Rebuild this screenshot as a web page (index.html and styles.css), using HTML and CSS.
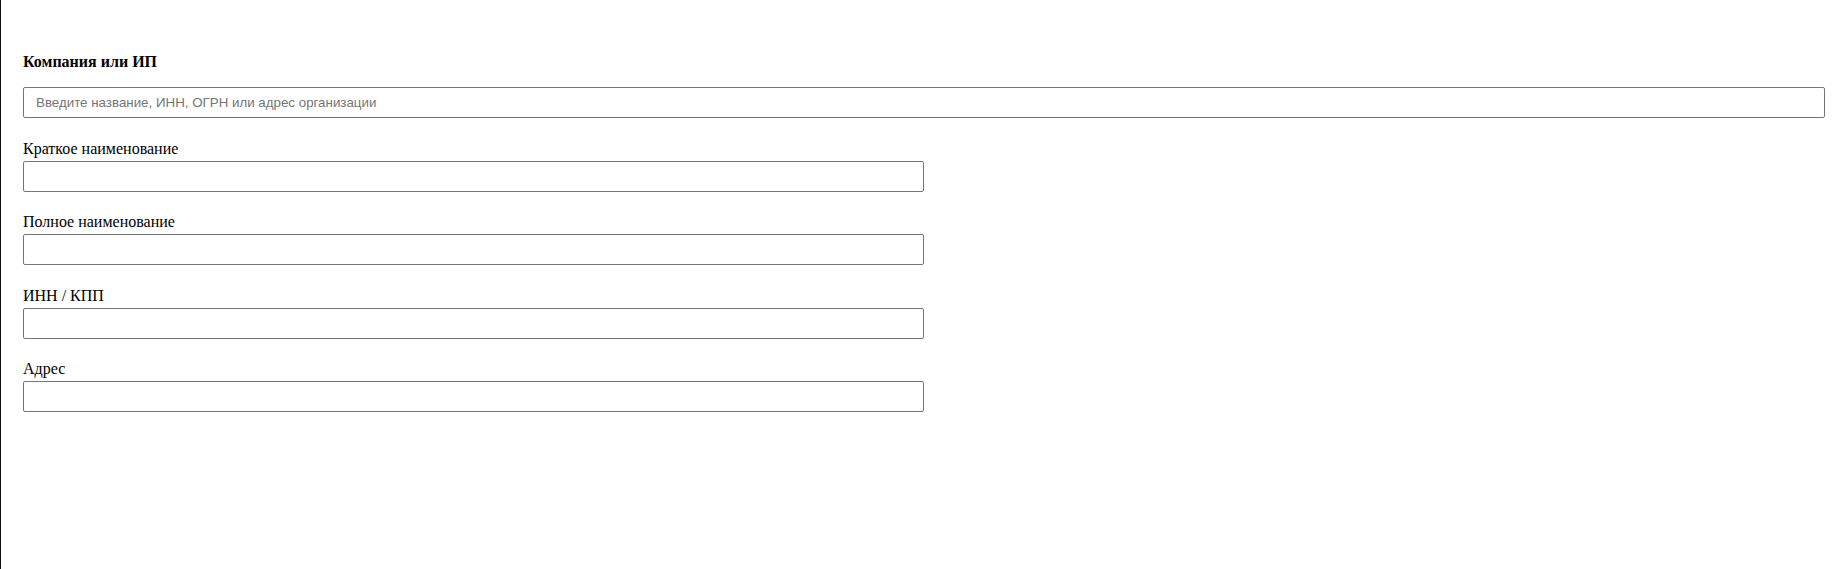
FILE: index.html
```html
<!DOCTYPE html>
<html lang="ru">
<head>
<meta charset="utf-8">
<title>Компания или ИП</title>
<link rel="stylesheet" href="styles.css">
</head>
<body>
<div class="page">
  <form class="company-form">
    <div class="title">Компания или ИП</div>
    <input class="field field-wide" type="text" placeholder="Введите название, ИНН, ОГРН или адрес организации">
    <div class="group">
      <label class="label">Краткое наименование</label>
      <input class="field field-half" type="text">
    </div>
    <div class="group">
      <label class="label">Полное наименование</label>
      <input class="field field-half" type="text">
    </div>
    <div class="group">
      <label class="label">ИНН / КПП</label>
      <input class="field field-half" type="text">
    </div>
    <div class="group">
      <label class="label">Адрес</label>
      <input class="field field-half" type="text">
    </div>
  </form>
</div>
</body>
</html>
```

FILE: styles.css
```css
html, body {
  margin: 0;
  padding: 0;
  background: #fff;
}

body {
  font-family: "Liberation Serif", "Times New Roman", serif;
  font-size: 16px;
  color: #000;
}

.page {
  box-sizing: border-box;
  min-height: 100vh;
  border-left: 1px solid #111;
  padding: 53px 19px 0 22px;
}

.company-form {
  display: flex;
  flex-direction: column;
}

.title {
  font-weight: bold;
  font-size: 16px;
  line-height: 18px;
  margin-bottom: 16px;
}

.field {
  box-sizing: border-box;
  display: block;
  height: 31px;
  margin: 0;
  border: 1px solid #767676;
  border-radius: 2px;
  padding: 0 12px;
  font-family: "Liberation Sans", Arial, sans-serif;
  font-size: 13.333px;
  color: #000;
  background: #fff;
  outline: none;
}

.field::placeholder {
  color: #757575;
}

.field-wide {
  width: 100%;
}

.field-half {
  width: 50%;
}

.group {
  display: flex;
  flex-direction: column;
  margin-top: 21.6px;
}

.label {
  display: block;
  line-height: 18px;
  margin-bottom: 3px;
}
```
